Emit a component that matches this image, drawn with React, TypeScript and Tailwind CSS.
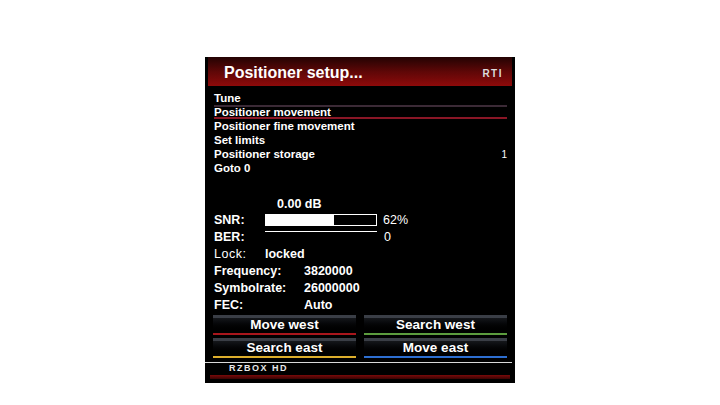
import React from "react";

const FONT = { fontFamily: '"Liberation Sans", Arial, sans-serif' };

const MENU = [
  { label: "Tune" },
  { label: "Positioner movement", selected: true },
  { label: "Positioner fine movement" },
  { label: "Set limits" },
  { label: "Positioner storage", value: "1" },
  { label: "Goto 0" },
];

const INFO = [
  { label: "Lock:", value: "locked", at: "w-[51px]" },
  { label: "Frequency:", value: "3820000", at: "w-[90px]" },
  { label: "Symbolrate:", value: "26000000", at: "w-[90px]" },
  { label: "FEC:", value: "Auto", at: "w-[90px]" },
];

function Button({ label, line }: { label: string; line: string }) {
  return (
    <div
      className={`flex h-[20px] w-[143px] items-center justify-center border-t-[3px] border-b-2 border-t-[#3a3e46] bg-gradient-to-b from-[#15171b] to-black pb-[1px] text-[13.5px] font-bold leading-none text-white ${line}`}
    >
      {label}
    </div>
  );
}

export default function App() {
  const snr = 62;
  return (
    <div className="flex h-[405px] w-[720px] justify-center bg-white pt-[57px]" style={FONT}>
      <div className="flex h-[326px] w-[310px] flex-col bg-black text-white">
        {/* title bar */}
        <div className="mx-[3px] flex h-[29px] items-center justify-between bg-gradient-to-b from-[#240303] via-[#5e0707] to-[#8e0a0a] pt-[3px] pl-[16px] pr-[9px]">
          <span className="text-[16px] font-bold leading-none">Positioner setup...</span>
          <span className="text-[10px] font-bold tracking-[1.5px] text-[#dcdcdc]">RTI</span>
        </div>

        {/* menu */}
        <div className="mt-[5px] flex flex-col pl-[9px] pr-[8px]">
          {MENU.map((m) => (
            <div
              key={m.label}
              className={`flex h-[14px] items-center justify-between pt-[1px] text-[11.5px] font-bold leading-none ${
                m.selected ? "border-t-2 border-b-2 border-t-[#3b2a36] border-b-[#8a1626]" : ""
              }`}
            >
              <span>{m.label}</span>
              {m.value && <span className="text-[10px] font-normal">{m.value}</span>}
            </div>
          ))}
        </div>

        {/* signal */}
        <div className="mt-[22px] flex flex-col pl-[9px] text-[12.5px] font-bold leading-none">
          <div className="flex h-[14px] items-center pl-[63px] pt-[1px]">0.00 dB</div>
          <div className="flex h-[18px] items-center">
            <span className="w-[51px]">SNR:</span>
            <div className="h-[12px] w-[112px] border border-white">
              <div className="h-full bg-white" style={{ width: `${snr}%` }} />
            </div>
            <span className="ml-[6px] font-normal">{snr}%</span>
          </div>
          <div className="flex h-[17px] items-center">
            <span className="w-[51px]">BER:</span>
            <div className="mt-[2px] h-px w-[112px] self-start bg-white" />
            <span className="ml-[7px] font-normal">0</span>
          </div>
          {INFO.map((r) => (
            <div key={r.label} className="flex h-[17px] items-center">
              <span className={`${r.at} ${r.label === "Lock:" ? "font-normal tracking-[0.5px]" : ""}`}>{r.label}</span>
              <span>{r.value}</span>
            </div>
          ))}
        </div>

        {/* colour buttons */}
        <div className="mt-[1px] flex flex-col gap-[3px] pl-[8px] pr-[8px]">
          <div className="flex justify-between">
            <Button label="Move west" line="border-b-[#a8161c]" />
            <Button label="Search west" line="border-b-[#5c9c3e]" />
          </div>
          <div className="flex justify-between">
            <Button label="Search east" line="border-b-[#dcae2c]" />
            <Button label="Move east" line="border-b-[#2d6ed0]" />
          </div>
        </div>

        <div className="mt-[4px] mr-[3px] h-px bg-[#d8d8d8]" />
        <div className="flex h-[11px] items-center pl-[24px] text-[9px] font-bold leading-none tracking-[1.5px] text-[#e8e8e8]">
          RZBOX HD
        </div>
        <div className="mx-[5px] mt-[1px] h-[4px] bg-gradient-to-b from-[#7a0a0a] to-[#3a0404]" />
      </div>
    </div>
  );
}
